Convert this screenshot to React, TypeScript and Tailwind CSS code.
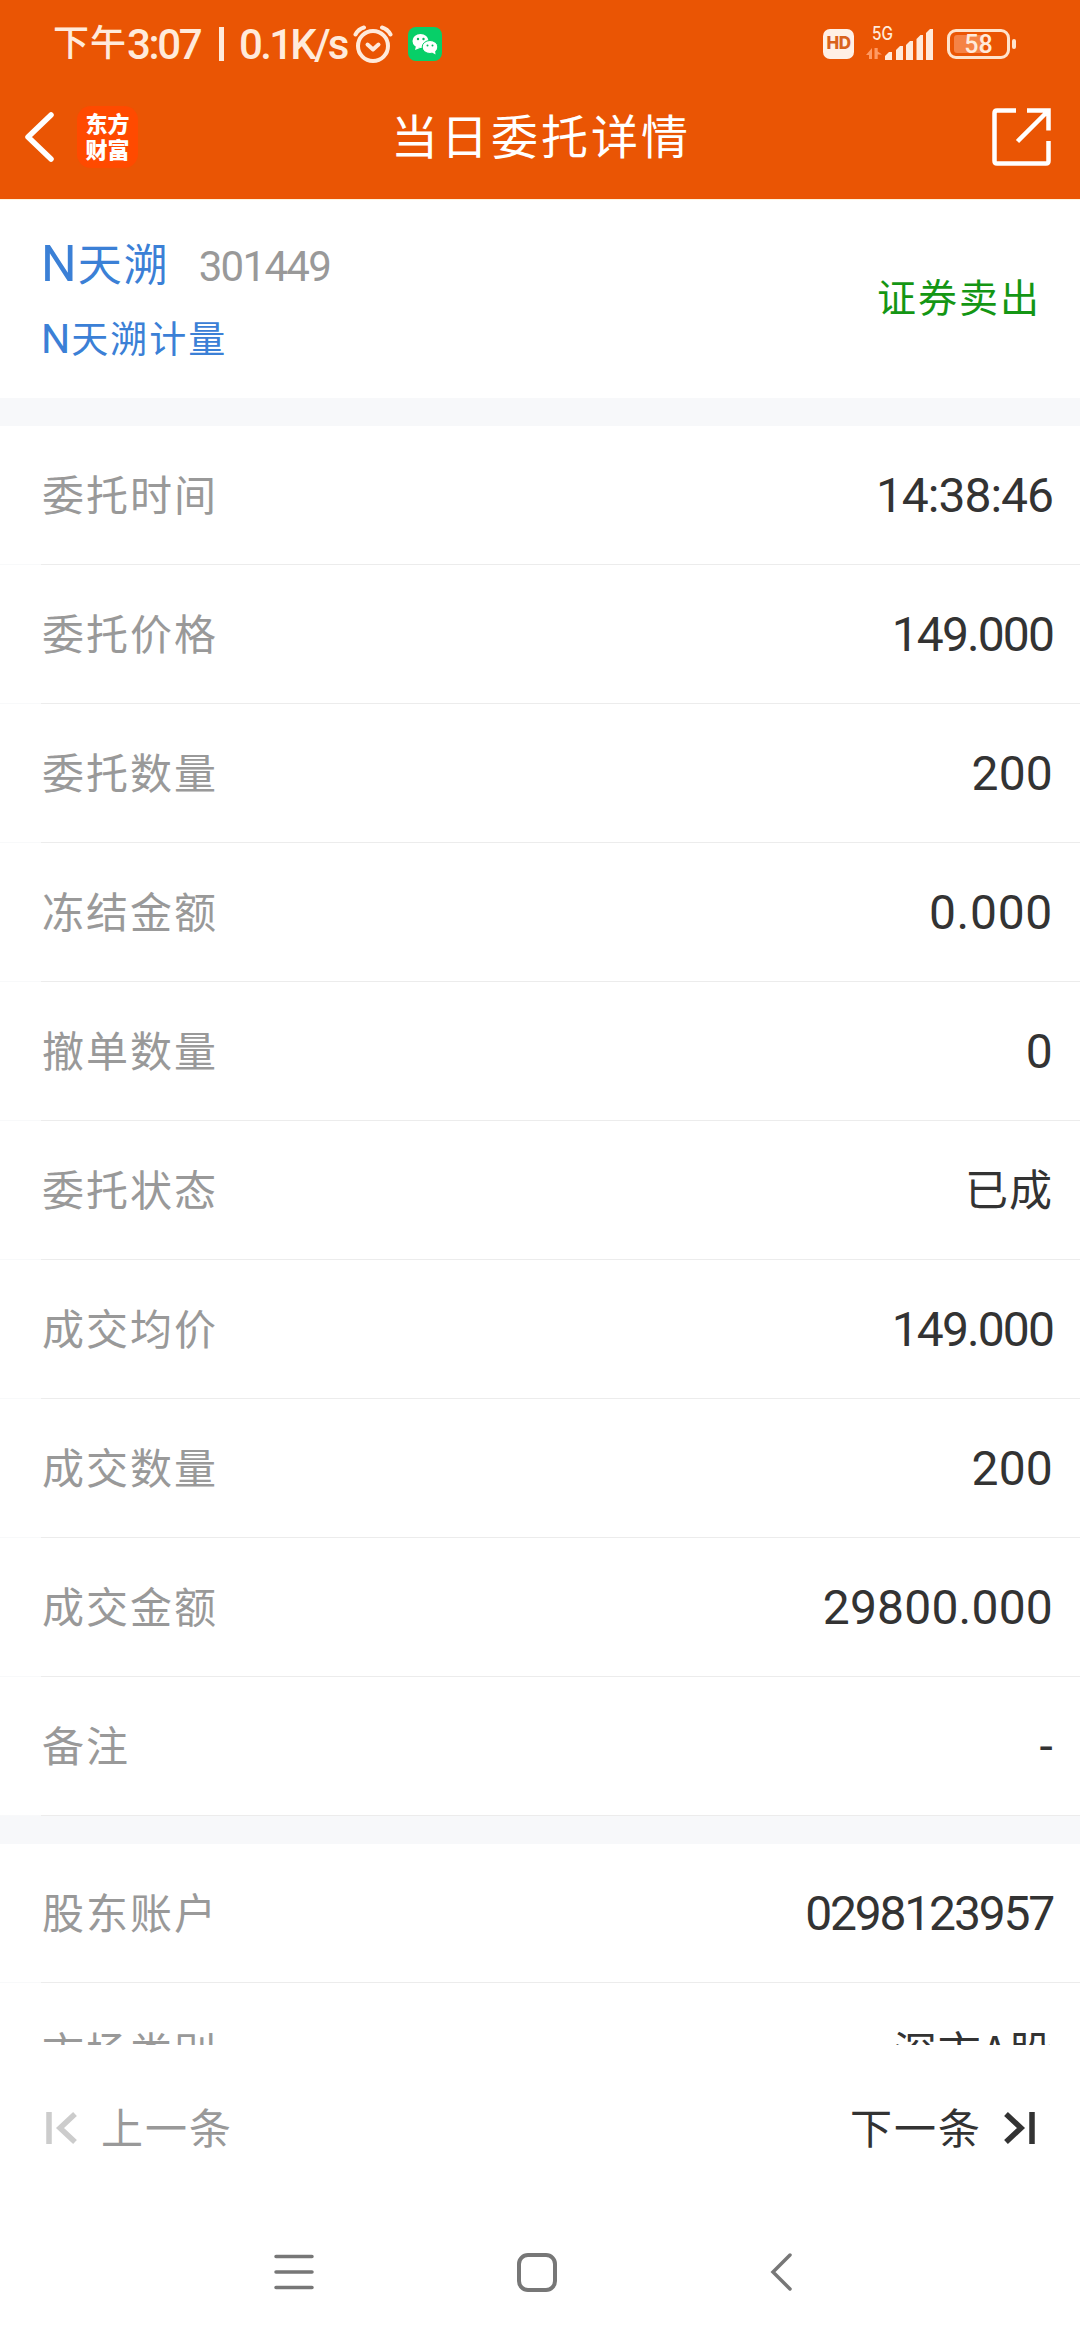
import React from "react";

type RowProps = {
  label: string;
  value: string;
  spacing?: string;
};

const orderRows: RowProps[] = [
  { label: "委托时间", value: "14:38:46", spacing: "tracking-[-1px]" },
  { label: "委托价格", value: "149.000", spacing: "tracking-[-1.9px]" },
  { label: "委托数量", value: "200" },
  { label: "冻结金额", value: "0.000", spacing: "tracking-[0.7px]" },
  { label: "撤单数量", value: "0" },
  { label: "委托状态", value: "已成" },
  { label: "成交均价", value: "149.000", spacing: "tracking-[-1.9px]" },
  { label: "成交数量", value: "200" },
  { label: "成交金额", value: "29800.000" },
  { label: "备注", value: "-" },
];

const accountRows: RowProps[] = [
  { label: "股东账户", value: "0298123957", spacing: "tracking-[-2.2px]" },
  { label: "市场类别", value: "深市A股" },
];

const StatusBar = () => (
  <div className="flex h-[88px] items-center pl-[53px] pr-[64px] text-[#ffeadb]">
    <div className="flex items-center whitespace-nowrap font-['Roboto','Noto_Sans_CJK_SC',sans-serif] font-medium">
      <span className="text-[36px] tracking-[1px]">下午</span>
      <span className="w-[75px] text-[42px] tracking-[-2.4px]">3:07</span>
      <span className="ml-[17px] h-[34px] w-[5px] bg-[#ffeadb]"></span>
      <span className="ml-[15px] w-[113px] text-[42px] tracking-[-2.7px]">0.1K/s</span>
    </div>
    <svg className="ml-px h-[40px] w-[40px]" viewBox="0 0 40 40" fill="none" stroke="currentColor" strokeWidth="4">
      <circle cx="20" cy="22" r="15" />
      <path d="M2.5 10.5 Q5.5 5 11 3.5M37.5 10.5 Q34.5 5 29 3.5" strokeLinecap="round" />
      <path d="M14.5 20.5l5.5 5 5.5-5" strokeLinecap="round" strokeLinejoin="round" />
    </svg>
    <svg className="ml-[15px] h-[34px] w-[34px]" viewBox="0 0 34 34">
      <rect width="34" height="34" rx="8" fill="#07cf68" />
      <ellipse cx="12.5" cy="14" rx="8" ry="7" fill="#fff" />
      <path d="M8 19l-1 4 5-2z" fill="#fff" />
      <ellipse cx="22" cy="20" rx="7.8" ry="6.5" fill="#fff" stroke="#07cf68" strokeWidth="1" />
      <path d="M24 25.5l3.5 2-.5-4z" fill="#fff" />
      <g fill="#07b85c">
        <circle cx="10" cy="12" r="1.2" />
        <circle cx="15.5" cy="12" r="1.2" />
        <circle cx="19.5" cy="18.5" r="1" />
        <circle cx="24.5" cy="18.5" r="1" />
      </g>
    </svg>

    <div className="ml-auto flex items-center font-['Inter',sans-serif]">
      <span className="flex h-[30px] w-[31px] items-center justify-center rounded-[7px] bg-[#fff0e6] text-[17px] font-extrabold tracking-[-0.5px] text-[#d9621d]">
        HD
      </span>
      <svg className="ml-[11px] h-[36px] w-[70px] overflow-visible" viewBox="864 26 70 36">
        <text x="871" y="40" fontSize="18" fontWeight="500" textLength="21" lengthAdjust="spacingAndGlyphs" fill="#ffeadb">
          5G
        </text>
        <path d="M871 48v11h-3v-4h-3l3-3.5zM873.5 59V48h3.2v3.5l4.3 3h-4.3V59z" fill="#ff9a63" />
        <path
          d="M884 56l4-4h3v8h-7zM895 50l4-4h3v14h-7zM905 45l4-4h3v19h-7zM915.5 39l4-4h2.5v25h-6.5zM925 33l4-4h3v31h-7z"
          fill="#ffeadb"
        />
      </svg>
      <div className="relative ml-[12px] flex h-[30px] w-[63px] items-center justify-center rounded-[9px] border-3 border-[#ffe3cc]">
        <span className="absolute left-[4px] top-[3px] h-[18px] w-[30px] rounded-[3px] bg-[#f58346]"></span>
        <span className="relative font-['Roboto',sans-serif] text-[25px] font-medium leading-none">58</span>
      </div>
      <span className="ml-[2px] h-[10px] w-[4px] rounded-[2px] bg-[#ffe3cc]"></span>
    </div>
  </div>
);

const TitleBar = () => (
  <div className="flex h-[111px] items-center justify-between pb-[14px] pl-[24px] pr-[29px] text-white">
    <div className="flex w-[200px] items-center">
      <svg className="h-[52px] w-[31px]" viewBox="0 0 31 52" fill="none" stroke="currentColor" strokeWidth="5.5">
        <path d="M27 4L4 26l23 22" strokeLinecap="round" strokeLinejoin="round" />
      </svg>
      <div className="ml-[22px] flex h-[62px] w-[61px] flex-col items-center justify-center rounded-[14px] bg-[#ff4a00] pb-[3px] text-[22px] font-black leading-[26px]">
        <span>东方</span>
        <span>财富</span>
      </div>
    </div>
    <h1 className="pb-[6px] pl-[7px] text-[47px] leading-none tracking-[3px]">当日委托详情</h1>
    <div className="flex w-[200px] justify-end">
      <svg className="h-[58px] w-[59px]" viewBox="0 0 59 58" fill="none" stroke="currentColor" strokeWidth="4.5">
        <path d="M24 2.5H5Q2.5 2.5 2.5 5V53Q2.5 55.5 5 55.5H54Q56.5 55.5 56.5 53V33" />
        <path d="M35 2.5H56.5V22.5M56 3L25.5 33.5" />
      </svg>
    </div>
  </div>
);

const Row: React.FC<RowProps> = ({ label, value, spacing }) => {
  const isNumber = /^[0-9:.-]+$/.test(value);

  return (
    <div className="flex h-[139px] flex-col">
      <div className="flex flex-1 items-center justify-between pl-[42px] pr-[27px]">
        <span className="pb-[5px] text-[42px] leading-none tracking-[2px] text-[#999]">{label}</span>
        {isNumber ? (
          <span className={`pt-[2px] font-['Roboto',sans-serif] text-[48px] leading-none text-[#333] ${spacing ?? "tracking-[0.2px]"}`}>
            {value}
          </span>
        ) : (
          <span className="pb-[5px] text-[43px] leading-none tracking-[1px] text-[#333]">{value}</span>
        )}
      </div>
      <div className="flex h-px">
        <div className="w-[41px] bg-[#f8f9fa]"></div>
        <div className="flex-1 bg-[#ececec]"></div>
      </div>
    </div>
  );
};

const App = () => {
  return (
    <div className="flex h-[2340px] w-[1080px] flex-col overflow-hidden bg-white font-['Noto_Sans_CJK_SC',sans-serif]">
      <header className="border-b border-[#fff3dc] bg-[#ea5504]">
        <StatusBar />
        <TitleBar />
      </header>

      {/* Stock summary */}
      <section className="flex h-[198px] items-center justify-between pl-[41px] pr-[39px]">
        <div className="text-[#3b80d6]">
          <div className="flex items-baseline leading-none">
            <span className="font-['Roboto',sans-serif] text-[50px]">N</span>
            <span className="ml-px text-[44px] tracking-[2px]">天溯</span>
            <span className="ml-[29px] font-['Roboto',sans-serif] text-[42px] tracking-[-1.7px] text-[#999]">301449</span>
          </div>
          <div className="mt-[30px] flex items-baseline leading-none">
            <span className="font-['Roboto',sans-serif] text-[41px]">N</span>
            <span className="ml-px text-[37px] tracking-[2px]">天溯计量</span>
          </div>
        </div>
        <span className="pb-[7px] text-[39px] leading-none tracking-[2px] text-[#149614]">证券卖出</span>
      </section>
      <div className="h-[28px] bg-[#f7f8fa]"></div>

      <main className="h-[1619px] overflow-hidden">
        {orderRows.map((row) => (
          <Row key={row.label} {...row} />
        ))}
        <div className="h-[28px] bg-[#f7f8fa]"></div>
        {accountRows.map((row) => (
          <Row key={row.label} {...row} />
        ))}
      </main>

      <footer className="flex h-[165px] items-center justify-between pl-[45px] pr-[44px] text-[42px] leading-none">
        <button className="flex items-center text-[#999]">
          <svg className="h-[34px] w-[32px]" viewBox="0 0 32 34" fill="none" stroke="#ccc" strokeWidth="5.5">
            <path d="M4 1v32M30 3L15 17l15 14" />
          </svg>
          <span className="ml-[24px] pb-[4px] tracking-[2px]">上一条</span>
        </button>
        <button className="flex items-center text-[#333]">
          <span className="pb-[4px] tracking-[2px]">下一条</span>
          <svg className="ml-[22px] h-[34px] w-[32px]" viewBox="0 0 32 34" fill="none" stroke="currentColor" strokeWidth="5.5">
            <path d="M28 1v32M2 3l15 14L2 31" />
          </svg>
        </button>
      </footer>

      {/* System navigation */}
      <nav className="flex h-[124px] items-center pl-[273px] text-[#777]">
        <svg className="h-[40px] w-[41px]" viewBox="0 0 41 40" stroke="currentColor" strokeWidth="3.5" strokeLinecap="round">
          <path d="M3 4.5h36M3 20h36M3 35.5h36" />
        </svg>
        <span className="ml-[203px] h-[39px] w-[40px] rounded-[11px] border-4 border-[#777]"></span>
        <svg className="ml-[213px] h-[40px] w-[22px]" viewBox="0 0 22 40" fill="none" stroke="currentColor" strokeWidth="3.5">
          <path d="M20 3L3 20l17 17" strokeLinecap="round" />
        </svg>
      </nav>
    </div>
  );
};

export default App;
